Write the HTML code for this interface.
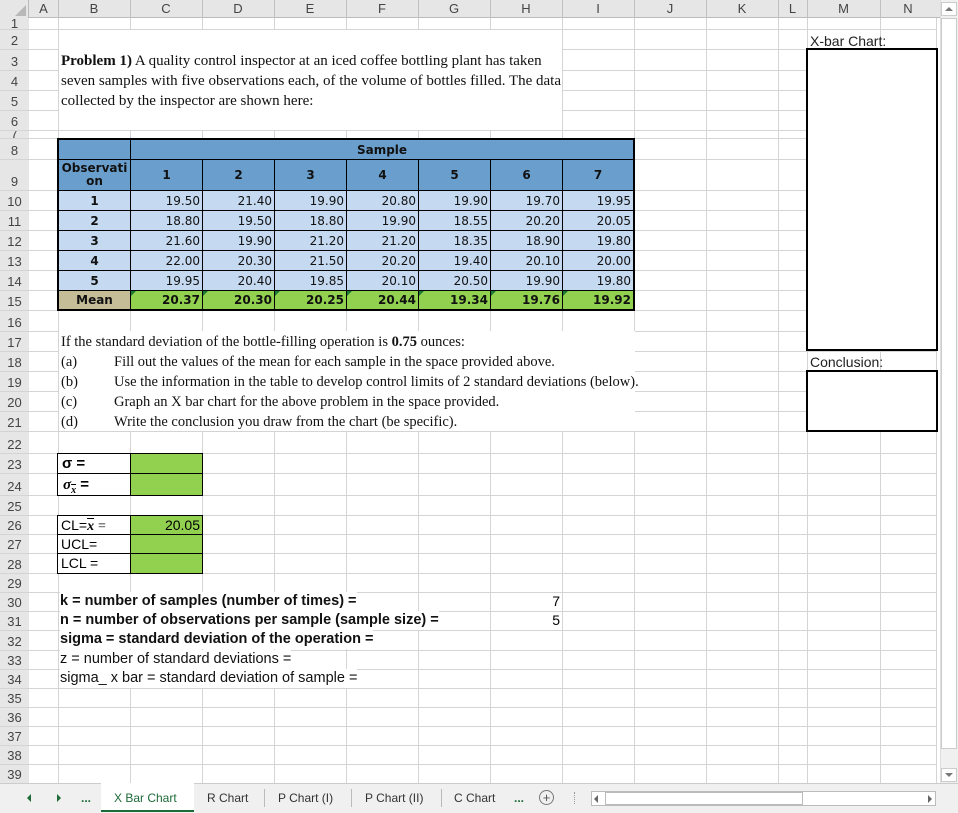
<!DOCTYPE html>
<html><head><meta charset="utf-8"><style>
*{margin:0;padding:0;box-sizing:border-box}
body{width:958px;height:813px;overflow:hidden;background:#fff;position:relative;font-family:"Liberation Sans",sans-serif}
.a{position:absolute}
.vl{position:absolute;top:18px;height:765px;width:1px;background:#d4d4d4}
.hl{position:absolute;left:0;width:936px;height:1px;background:#d4d4d4}
.ch{position:absolute;top:0;height:18px;font-size:13px;color:#444;text-align:center;line-height:18px}
.rh{position:absolute;left:0;width:29px;font-size:13px;color:#444;text-align:center;background:#e6e6e6;display:flex;align-items:flex-end;justify-content:center;padding-bottom:1px}
.serif{font-family:"Liberation Serif",serif;font-size:14.5px;color:#111;white-space:nowrap}
.t{position:absolute;font-family:"DejaVu Sans",sans-serif;font-size:12px;border:1px solid #000;color:#111;display:flex;align-items:center;padding:0 2px}
.n{justify-content:flex-end;background:#c5d9f1}
.b{font-weight:bold}
.c{justify-content:center}
.s{position:absolute;font-size:14.5px;color:#111;white-space:nowrap;background:#fff;line-height:19px}
.tab{position:absolute;top:791px;font-size:12px;color:#333}
</style></head><body>
<div class="a" style="left:0;top:0;width:940px;height:18px;background:#e6e6e6;border-bottom:1px solid #bbb"></div>
<div class="a" style="left:0;top:0;width:29px;height:783px;background:#e6e6e6;border-right:1px solid #bbb"></div>
<svg class="a" style="left:14px;top:4px" width="13" height="13"><polygon points="12,1 12,12 1,12" fill="#b8b8b8"/></svg>
<div class="vl" style="left:58px"></div><div class="vl" style="left:130px"></div><div class="vl" style="left:202px"></div><div class="vl" style="left:274px"></div><div class="vl" style="left:346px"></div><div class="vl" style="left:418px"></div><div class="vl" style="left:490px"></div><div class="vl" style="left:562px"></div><div class="vl" style="left:634px"></div><div class="vl" style="left:706px"></div><div class="vl" style="left:778px"></div><div class="vl" style="left:807px"></div><div class="vl" style="left:880px"></div><div class="vl" style="left:936px"></div>
<div class="a" style="left:58px;top:0;width:1px;height:18px;background:#c0c0c0"></div><div class="a" style="left:130px;top:0;width:1px;height:18px;background:#c0c0c0"></div><div class="a" style="left:202px;top:0;width:1px;height:18px;background:#c0c0c0"></div><div class="a" style="left:274px;top:0;width:1px;height:18px;background:#c0c0c0"></div><div class="a" style="left:346px;top:0;width:1px;height:18px;background:#c0c0c0"></div><div class="a" style="left:418px;top:0;width:1px;height:18px;background:#c0c0c0"></div><div class="a" style="left:490px;top:0;width:1px;height:18px;background:#c0c0c0"></div><div class="a" style="left:562px;top:0;width:1px;height:18px;background:#c0c0c0"></div><div class="a" style="left:634px;top:0;width:1px;height:18px;background:#c0c0c0"></div><div class="a" style="left:706px;top:0;width:1px;height:18px;background:#c0c0c0"></div><div class="a" style="left:778px;top:0;width:1px;height:18px;background:#c0c0c0"></div><div class="a" style="left:807px;top:0;width:1px;height:18px;background:#c0c0c0"></div><div class="a" style="left:880px;top:0;width:1px;height:18px;background:#c0c0c0"></div>
<div class="ch" style="left:29px;width:29px">A</div><div class="ch" style="left:58px;width:72px">B</div><div class="ch" style="left:130px;width:72px">C</div><div class="ch" style="left:202px;width:72px">D</div><div class="ch" style="left:274px;width:72px">E</div><div class="ch" style="left:346px;width:72px">F</div><div class="ch" style="left:418px;width:72px">G</div><div class="ch" style="left:490px;width:72px">H</div><div class="ch" style="left:562px;width:72px">I</div><div class="ch" style="left:634px;width:72px">J</div><div class="ch" style="left:706px;width:72px">K</div><div class="ch" style="left:778px;width:29px">L</div><div class="ch" style="left:807px;width:73px">M</div><div class="ch" style="left:880px;width:56px">N</div>
<div class="hl" style="top:29px"></div><div class="hl" style="top:49px"></div><div class="hl" style="top:70px"></div><div class="hl" style="top:90px"></div><div class="hl" style="top:110px"></div><div class="hl" style="top:130px"></div><div class="hl" style="top:138px"></div><div class="hl" style="top:159px"></div><div class="hl" style="top:190px"></div><div class="hl" style="top:210px"></div><div class="hl" style="top:230px"></div><div class="hl" style="top:250px"></div><div class="hl" style="top:270px"></div><div class="hl" style="top:290px"></div><div class="hl" style="top:310px"></div><div class="hl" style="top:331px"></div><div class="hl" style="top:351px"></div><div class="hl" style="top:371px"></div><div class="hl" style="top:391px"></div><div class="hl" style="top:411px"></div><div class="hl" style="top:431px"></div><div class="hl" style="top:453px"></div><div class="hl" style="top:473px"></div><div class="hl" style="top:495px"></div><div class="hl" style="top:515px"></div><div class="hl" style="top:534px"></div><div class="hl" style="top:553px"></div><div class="hl" style="top:573px"></div><div class="hl" style="top:592px"></div><div class="hl" style="top:611px"></div><div class="hl" style="top:630px"></div><div class="hl" style="top:650px"></div><div class="hl" style="top:669px"></div><div class="hl" style="top:688px"></div><div class="hl" style="top:707px"></div><div class="hl" style="top:726px"></div><div class="hl" style="top:745px"></div><div class="hl" style="top:764px"></div><div class="hl" style="top:783px"></div>
<div class="rh" style="top:18px;height:11px;line-height:9px;overflow:hidden">1</div>
<div class="rh" style="top:30px;height:19px">2</div><div class="rh" style="top:50px;height:20px">3</div><div class="rh" style="top:71px;height:19px">4</div><div class="rh" style="top:91px;height:19px">5</div><div class="rh" style="top:111px;height:19px">6</div><div class="rh" style="top:131px;height:7px;overflow:hidden;line-height:6px;align-items:flex-start;padding:0">7</div><div class="rh" style="top:139px;height:20px">8</div><div class="rh" style="top:160px;height:30px">9</div><div class="rh" style="top:191px;height:19px">10</div><div class="rh" style="top:211px;height:19px">11</div><div class="rh" style="top:231px;height:19px">12</div><div class="rh" style="top:251px;height:19px">13</div><div class="rh" style="top:271px;height:19px">14</div><div class="rh" style="top:291px;height:19px">15</div><div class="rh" style="top:311px;height:20px">16</div><div class="rh" style="top:332px;height:19px">17</div><div class="rh" style="top:352px;height:19px">18</div><div class="rh" style="top:372px;height:19px">19</div><div class="rh" style="top:392px;height:19px">20</div><div class="rh" style="top:412px;height:19px">21</div><div class="rh" style="top:432px;height:21px">22</div><div class="rh" style="top:454px;height:19px">23</div><div class="rh" style="top:474px;height:21px">24</div><div class="rh" style="top:496px;height:19px">25</div><div class="rh" style="top:516px;height:18px">26</div><div class="rh" style="top:535px;height:18px">27</div><div class="rh" style="top:554px;height:19px">28</div><div class="rh" style="top:574px;height:18px">29</div><div class="rh" style="top:593px;height:18px">30</div><div class="rh" style="top:612px;height:18px">31</div><div class="rh" style="top:631px;height:19px">32</div><div class="rh" style="top:651px;height:18px">33</div><div class="rh" style="top:670px;height:18px">34</div><div class="rh" style="top:689px;height:18px">35</div><div class="rh" style="top:708px;height:18px">36</div><div class="rh" style="top:727px;height:18px">37</div><div class="rh" style="top:746px;height:18px">38</div><div class="rh" style="top:765px;height:18px">39</div>

<div class="a" style="left:59px;top:30px;width:503px;height:100px;background:#fff"></div>
<div class="a serif" style="left:61px;top:51px;line-height:20px;font-size:15px"><b>Problem 1)</b> A quality control inspector at an iced coffee bottling plant has taken<br>seven samples with five observations each, of the volume of bottles filled. The data<br>collected by the inspector are shown here:</div>

<div class="a" style="left:57px;top:138px;width:578px;height:173px;background:#000"></div>
<div class="t b c" style="left:58px;top:139px;width:73px;height:21px;background:#6a9fcd"></div>
<div class="t b c" style="left:130px;top:139px;width:504px;height:21px;background:#6a9fcd">Sample</div>
<div class="t b c" style="left:58px;top:159px;width:73px;height:32px;background:#6a9fcd;line-height:13px;text-align:center;padding:0">Observati<br>on</div>
<div class="t b c" style="left:130px;top:159px;width:73px;height:32px;background:#6a9fcd">1</div><div class="t b c" style="left:202px;top:159px;width:73px;height:32px;background:#6a9fcd">2</div><div class="t b c" style="left:274px;top:159px;width:73px;height:32px;background:#6a9fcd">3</div><div class="t b c" style="left:346px;top:159px;width:73px;height:32px;background:#6a9fcd">4</div><div class="t b c" style="left:418px;top:159px;width:73px;height:32px;background:#6a9fcd">5</div><div class="t b c" style="left:490px;top:159px;width:73px;height:32px;background:#6a9fcd">6</div><div class="t b c" style="left:562px;top:159px;width:72px;height:32px;background:#6a9fcd">7</div>

<div class="t b c" style="left:58px;top:190px;width:73px;height:21px;background:#c5d9f1">1</div><div class="t n" style="left:130px;top:190px;width:73px;height:21px">19.50</div><div class="t n" style="left:202px;top:190px;width:73px;height:21px">21.40</div><div class="t n" style="left:274px;top:190px;width:73px;height:21px">19.90</div><div class="t n" style="left:346px;top:190px;width:73px;height:21px">20.80</div><div class="t n" style="left:418px;top:190px;width:73px;height:21px">19.90</div><div class="t n" style="left:490px;top:190px;width:73px;height:21px">19.70</div><div class="t n" style="left:562px;top:190px;width:72px;height:21px">19.95</div>
<div class="t b c" style="left:58px;top:210px;width:73px;height:21px;background:#c5d9f1">2</div><div class="t n" style="left:130px;top:210px;width:73px;height:21px">18.80</div><div class="t n" style="left:202px;top:210px;width:73px;height:21px">19.50</div><div class="t n" style="left:274px;top:210px;width:73px;height:21px">18.80</div><div class="t n" style="left:346px;top:210px;width:73px;height:21px">19.90</div><div class="t n" style="left:418px;top:210px;width:73px;height:21px">18.55</div><div class="t n" style="left:490px;top:210px;width:73px;height:21px">20.20</div><div class="t n" style="left:562px;top:210px;width:72px;height:21px">20.05</div>
<div class="t b c" style="left:58px;top:230px;width:73px;height:21px;background:#c5d9f1">3</div><div class="t n" style="left:130px;top:230px;width:73px;height:21px">21.60</div><div class="t n" style="left:202px;top:230px;width:73px;height:21px">19.90</div><div class="t n" style="left:274px;top:230px;width:73px;height:21px">21.20</div><div class="t n" style="left:346px;top:230px;width:73px;height:21px">21.20</div><div class="t n" style="left:418px;top:230px;width:73px;height:21px">18.35</div><div class="t n" style="left:490px;top:230px;width:73px;height:21px">18.90</div><div class="t n" style="left:562px;top:230px;width:72px;height:21px">19.80</div>
<div class="t b c" style="left:58px;top:250px;width:73px;height:21px;background:#c5d9f1">4</div><div class="t n" style="left:130px;top:250px;width:73px;height:21px">22.00</div><div class="t n" style="left:202px;top:250px;width:73px;height:21px">20.30</div><div class="t n" style="left:274px;top:250px;width:73px;height:21px">21.50</div><div class="t n" style="left:346px;top:250px;width:73px;height:21px">20.20</div><div class="t n" style="left:418px;top:250px;width:73px;height:21px">19.40</div><div class="t n" style="left:490px;top:250px;width:73px;height:21px">20.10</div><div class="t n" style="left:562px;top:250px;width:72px;height:21px">20.00</div>
<div class="t b c" style="left:58px;top:270px;width:73px;height:21px;background:#c5d9f1">5</div><div class="t n" style="left:130px;top:270px;width:73px;height:21px">19.95</div><div class="t n" style="left:202px;top:270px;width:73px;height:21px">20.40</div><div class="t n" style="left:274px;top:270px;width:73px;height:21px">19.85</div><div class="t n" style="left:346px;top:270px;width:73px;height:21px">20.10</div><div class="t n" style="left:418px;top:270px;width:73px;height:21px">20.50</div><div class="t n" style="left:490px;top:270px;width:73px;height:21px">19.90</div><div class="t n" style="left:562px;top:270px;width:72px;height:21px">19.80</div>
<div class="t b c" style="left:58px;top:290px;width:73px;height:20px;background:#c4bd97">Mean</div><div class="t n b" style="left:130px;top:290px;width:73px;height:20px;background:#92d050">20.37</div><div class="t n b" style="left:202px;top:290px;width:73px;height:20px;background:#92d050">20.30</div><div class="t n b" style="left:274px;top:290px;width:73px;height:20px;background:#92d050">20.25</div><div class="t n b" style="left:346px;top:290px;width:73px;height:20px;background:#92d050">20.44</div><div class="t n b" style="left:418px;top:290px;width:73px;height:20px;background:#92d050">19.34</div><div class="t n b" style="left:490px;top:290px;width:73px;height:20px;background:#92d050">19.76</div><div class="t n b" style="left:562px;top:290px;width:72px;height:20px;background:#92d050">19.92</div>
<svg class="a" style="left:131px;top:291px" width="500" height="6"><polygon points="0,0 5,0 0,5" fill="#1a7a30"/><polygon points="72,0 77,0 72,5" fill="#1a7a30"/><polygon points="144,0 149,0 144,5" fill="#1a7a30"/><polygon points="216,0 221,0 216,5" fill="#1a7a30"/><polygon points="288,0 293,0 288,5" fill="#1a7a30"/><polygon points="360,0 365,0 360,5" fill="#1a7a30"/><polygon points="432,0 437,0 432,5" fill="#1a7a30"/></svg>

<div class="a" style="left:58px;top:331px;width:577px;height:100px;background:#fff;border-left:1px solid #d4d4d4"></div>
<div class="a serif" style="left:61px;top:332px;line-height:20px">If the standard deviation of the bottle-filling operation is <b>0.75</b> ounces:<br>(a)<br>(b)<br>(c)<br>(d)</div>
<div class="a serif" style="left:114px;top:352px;line-height:20px">Fill out the values of the mean for each sample in the space provided above.<br>Use the information in the table to develop control limits of 2 standard deviations (below).<br>Graph an X bar chart for the above problem in the space provided.<br>Write the conclusion you draw from the chart (be specific).</div>

<div class="a" style="left:57px;top:453px;width:146px;height:43px;border:1px solid #000;background:#fff"></div>
<div class="a" style="left:130px;top:453px;width:73px;height:43px;background:#92d050;border:1px solid #000"></div>
<div class="a" style="left:57px;top:473px;width:146px;height:1px;background:#000"></div>
<div class="a" style="left:62px;top:454px;font-size:15px;font-weight:bold;line-height:19px">σ =</div>
<div class="a" style="left:63px;top:475px;font-size:15px;font-weight:bold;line-height:19px"><i style="font-family:'Liberation Serif',serif">σ<sub style="font-size:10px;text-decoration:overline">x</sub></i> =</div>

<div class="a" style="left:57px;top:515px;width:146px;height:59px;border:1px solid #000;background:#fff"></div>
<div class="a" style="left:130px;top:515px;width:73px;height:59px;background:#92d050;border:1px solid #000"></div>
<div class="a" style="left:57px;top:534px;width:146px;height:1px;background:#000"></div>
<div class="a" style="left:57px;top:553px;width:146px;height:1px;background:#000"></div>
<div class="a" style="left:61px;top:516px;font-size:14px;line-height:18px">CL=<i style="font-family:'Liberation Serif',serif;font-weight:bold;text-decoration:overline">x</i> <span style="font-family:'Liberation Serif',serif">=</span></div>
<div class="a" style="left:130px;top:516px;width:70px;text-align:right;font-size:14px;line-height:18px">20.05</div>
<div class="a" style="left:61px;top:535px;font-size:14px;line-height:18px">UCL=</div>
<div class="a" style="left:61px;top:554px;font-size:14px;line-height:18px">LCL =</div>

<div class="s b" style="left:60px;top:592px">k = number of samples (number of times) =</div>
<div class="s b" style="left:60px;top:611px">n = number of observations per sample (sample size) =</div>
<div class="s b" style="left:60px;top:630px">sigma = standard deviation of the operation =</div>
<div class="s" style="left:60px;top:650px">z = number of standard deviations =</div>
<div class="s" style="left:60px;top:669px">sigma_ x bar = standard deviation of sample =</div>
<div class="a" style="left:540px;top:592px;width:20px;text-align:right;font-size:14px;line-height:19px">7</div>
<div class="a" style="left:540px;top:611px;width:20px;text-align:right;font-size:14px;line-height:19px">5</div>

<div class="s" style="left:810px;top:32px;background:transparent;color:#222;font-size:14px">X-bar Chart:</div>
<div class="a" style="left:806px;top:48px;width:132px;height:303px;border:2px solid #000;background:#fff"></div>
<div class="s" style="left:810px;top:353px;background:transparent;color:#222;font-size:14px">Conclusion:</div>
<div class="a" style="left:806px;top:370px;width:132px;height:62px;border:2px solid #000;background:#fff"></div>

<div class="a" style="left:940px;top:0;width:18px;height:783px;background:#f0f0f0;border-left:1px solid #ddd"></div>
<div class="a" style="left:941px;top:2px;width:16px;height:14px;background:#fff;border:1px solid #ccc"></div>
<svg class="a" style="left:944px;top:5px" width="10" height="8"><polygon points="1,6 5,2 9,6" fill="#777"/></svg>
<div class="a" style="left:941px;top:18px;width:16px;height:731px;background:#fff;border:1px solid #ccc"></div>
<div class="a" style="left:941px;top:768px;width:16px;height:14px;background:#fff;border:1px solid #ccc"></div>
<svg class="a" style="left:944px;top:771px" width="10" height="8"><polygon points="1,2 5,6 9,2" fill="#777"/></svg>

<div class="a" style="left:0;top:783px;width:958px;height:30px;background:#f0f0f0;border-top:1px solid #ccc"></div>
<svg class="a" style="left:25px;top:793px" width="40" height="10"><polygon points="6,1 2,5 6,9" fill="#1d6b39"/><polygon points="32,1 36,5 32,9" fill="#1d6b39"/></svg>
<div class="tab" style="left:81px;color:#1d6b39;font-weight:bold">...</div>
<div class="a" style="left:101px;top:783px;width:93px;height:29px;background:#fff;border-bottom:2px solid #1d6b39"></div>
<div class="tab" style="left:114px;color:#1d6b39">X Bar Chart</div>
<div class="tab" style="left:207px">R Chart</div>
<div class="a" style="left:264px;top:789px;width:1px;height:18px;background:#bbb"></div>
<div class="tab" style="left:278px">P Chart (I)</div>
<div class="a" style="left:351px;top:789px;width:1px;height:18px;background:#bbb"></div>
<div class="tab" style="left:365px">P Chart (II)</div>
<div class="a" style="left:441px;top:789px;width:1px;height:18px;background:#bbb"></div>
<div class="tab" style="left:454px">C Chart</div>
<div class="tab" style="left:514px;color:#1d6b39;font-weight:bold">...</div>
<div class="a" style="left:539px;top:790px;width:15px;height:15px;border:1px solid #777;border-radius:50%;text-align:center;font-size:13px;line-height:13px;color:#555">+</div>
<div class="a" style="left:574px;top:792px;width:1px;height:12px;border-left:1px dotted #999"></div>
<div class="a" style="left:591px;top:791px;width:345px;height:15px;background:#fff;border:1px solid #bbb"></div>
<div class="a" style="left:605px;top:792px;width:198px;height:13px;border:1px solid #bbb;background:#fff"></div>
<svg class="a" style="left:593px;top:794px" width="8" height="10"><polygon points="5,1 1,5 5,9" fill="#666"/></svg>
<svg class="a" style="left:926px;top:794px" width="8" height="10"><polygon points="2,1 6,5 2,9" fill="#666"/></svg>
</body></html>
